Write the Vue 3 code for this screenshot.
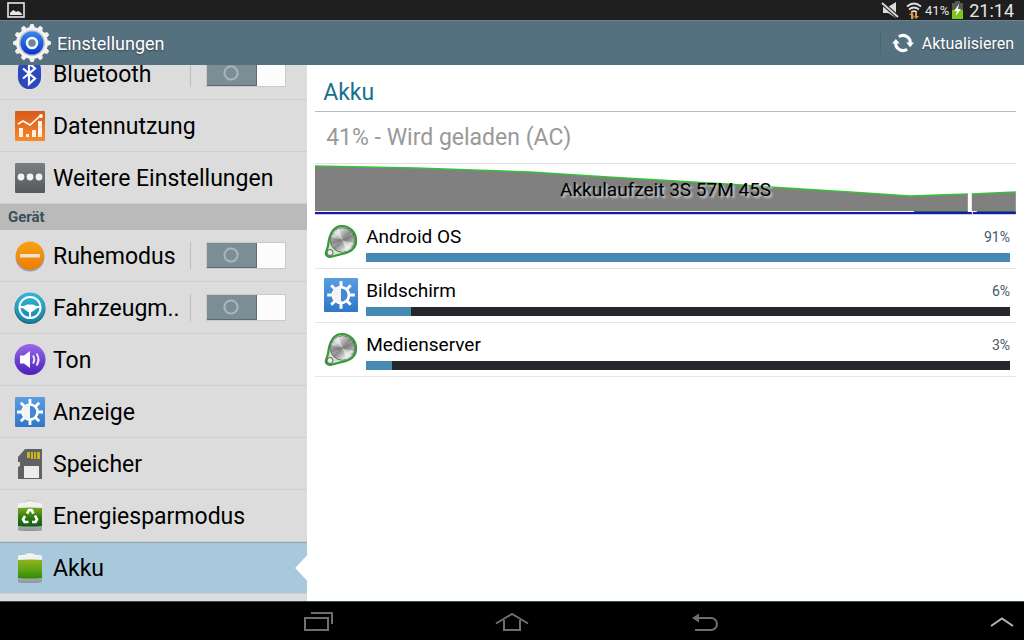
<template>
  <div class="tablet">
    <header class="status-bar">
      <svg class="status-picture" viewBox="0 0 18 16" aria-hidden="true">
        <rect x="1" y="1" width="16" height="14" fill="none" stroke="#e6e6e6" stroke-width="1.6" />
        <path d="M3 13v-2l2-2 1-1 2 1 1 1 2-1 2 1 2 2v1z" fill="#e6e6e6" />
      </svg>
      <div class="status-right">
        <svg class="status-mute" viewBox="0 0 18 18" aria-hidden="true">
          <path d="M2 6h5l8-5v16l-8-5H2z" fill="#dcdcdc" />
          <path d="M1 2l16 14" stroke="#1e1e1e" stroke-width="4" />
          <path d="M1 2l16 14" stroke="#dcdcdc" stroke-width="1.8" />
        </svg>
        <svg class="status-wifi" viewBox="0 0 16 18" aria-hidden="true">
          <g fill="none" stroke="#e0e0e0" stroke-width="1.8">
            <path d="M1 5.5q7-6 14 0" />
            <path d="M3 8.5q5-4 10 0" />
            <path d="M5.2 11.2q2.8-2 5.6 0" />
          </g>
          <path d="M5 18v-4H3l3-3 1.500 3v4zM9 11h2v4h2l-3 3-2-3h1z" fill="#e39b4b" />
        </svg>
        <span class="status-percent">41%</span>
        <svg class="status-battery" viewBox="0 0 13 18" aria-hidden="true">
          <path d="M4 0h5v2h3v7H1V2h3z" fill="#555b50" />
          <path d="M1 9h11v9H1z" fill="#7bc51c" />
          <path d="M8 3L3 10h3l-1.500 5L10 8H7z" fill="#fff" />
        </svg>
        <span class="status-time">21:14</span>
      </div>
    </header>

    <div class="action-bar">
      <svg class="app-icon" viewBox="0 0 38 38" aria-hidden="true">
        <defs>
          <linearGradient id="gearBlue" x1="0" y1="0" x2="0" y2="1">
            <stop offset="0" stop-color="#3c86ee" />
            <stop offset="1" stop-color="#0a38c4" />
          </linearGradient>
        </defs>
        <path :d="gear" fill="#f5f3ee" stroke="#f5f3ee" stroke-width="1" stroke-linejoin="round" />
        <circle cx="19" cy="19" r="13" fill="#b9c2d8" />
        <circle cx="19" cy="19" r="11.500" fill="url(#gearBlue)" />
        <circle cx="19" cy="19" r="5" fill="#6f84a4" stroke="#f4f6fa" stroke-width="2.600" />
      </svg>
      <h1 class="app-title">Einstellungen</h1>
      <button class="refresh" type="button">
        <svg viewBox="0 0 24 24" aria-hidden="true">
          <g fill="none" stroke="#fff" stroke-width="3.400">
            <path d="M7.500 5.200A8 8 0 0 1 20 12" />
            <path d="M16.500 18.800A8 8 0 0 1 4 12" />
          </g>
          <path d="M15.500 11.500h8.500l-4.200 5zM0 12.500h8.500L4.200 7.500z" fill="#fff" />
        </svg>
        Aktualisieren
      </button>
    </div>

    <div class="content">
      <nav class="sidebar" aria-label="Einstellungen">
        <template v-for="group in groups" :key="group.id">
          <h2 v-if="group.title" class="group-title">{{ group.title }}</h2>
          <ul class="menu" :class="{ scrolled: !group.title }">
            <li v-for="item in group.items" :key="item.icon" class="menu-row" :class="{ selected: item.icon === selected }">
              <a class="menu-link" href="#" @click.prevent="selected = item.icon">
                <svg class="menu-icon" viewBox="0 0 32 32" aria-hidden="true">
                  <g v-if="item.icon === 'bluetooth'">
                    <rect x="4" y="0" width="23" height="31" rx="11.500" fill="#2b48bd" />
                    <path d="M9 10.500l12 10-6 5.500V5l6 5.500-12 10" fill="none" stroke="#fff" stroke-width="2.200" />
                  </g>
                  <g v-else-if="item.icon === 'data'">
                    <rect x="1" y="1" width="30" height="30" rx="1" fill="url(#orangeFill)" />
                    <path d="M5 18h4v9H5zM12 24h3v3h-3zM18 20h4v7h-4zM24 11h4v16h-4z" fill="#fff3e8" />
                    <path d="M4 14l5-3 7 4 10-9" fill="none" stroke="#fff" stroke-width="1.600" />
                    <circle cx="27" cy="6" r="1.900" fill="#fff" />
                  </g>
                  <g v-else-if="item.icon === 'more'">
                    <rect x="1" y="1" width="30" height="30" rx="1" fill="url(#grayFill)" />
                    <circle cx="7" cy="15" r="3.400" fill="#f2f2f2" />
                    <circle cx="16" cy="15" r="3.400" fill="#f2f2f2" />
                    <circle cx="25" cy="15" r="3.400" fill="#f2f2f2" />
                  </g>
                  <g v-else-if="item.icon === 'blocking'">
                    <circle cx="16" cy="17" r="14.500" fill="#a39a9c" />
                    <circle cx="16" cy="15.500" r="14" fill="url(#amberFill)" />
                    <rect x="6" y="14" width="20" height="3.500" fill="#efe2d2" />
                  </g>
                  <g v-else-if="item.icon === 'car'">
                    <circle cx="16" cy="16.500" r="15.500" fill="#27677f" />
                    <circle cx="16" cy="15.500" r="15" fill="url(#cyanFill)" />
                    <circle cx="16" cy="15.500" r="10.500" fill="none" stroke="#fff" stroke-width="2" />
                    <path d="M6 14q5 0 7-1.500h6q2 1.500 7 1.500v1.500q-4 .5-6 3L17 20.500V26h-2v-5.500l-3-2q-2-2.500-6-3z" fill="#fff" />
                  </g>
                  <g v-else-if="item.icon === 'sound'">
                    <circle cx="16" cy="15.500" r="15.500" fill="url(#violetFill)" />
                    <path d="M6 11.500h4L16 7v17l-6-4.500H6z" fill="#fff" />
                    <path d="M19 11.500q2.500 4 0 8M22.500 9.500q4 6 0 12" fill="none" stroke="#efe6ff" stroke-width="2" />
                  </g>
                  <g v-else-if="item.icon === 'display'">
                    <rect x="1" y="1" width="30" height="30" rx="1" fill="url(#blueFill)" />
                    <path :d="rays" stroke="#fff" stroke-width="2.800" />
                    <circle cx="16" cy="16" r="7.500" fill="#4289d5" stroke="#fff" stroke-width="2.600" />
                    <path d="M16 8a8 8 0 0 0 0 16z" fill="#f4f4f4" />
                  </g>
                  <g v-else-if="item.icon === 'storage'">
                    <path d="M11 1h17v30H4V19l2-1v-4H4V9z" fill="#5f6163" />
                    <path d="M13 4h3v6h-3zM17 4h2v7h-2zM20 4h2v7h-2zM23 4h3v7h-3z" fill="#c9b51c" />
                    <path d="M10 18h15v12H10z" fill="#ececec" />
                  </g>
                  <g v-else-if="item.icon === 'saving' || item.icon === 'battery'">
                    <ellipse cx="16" cy="2.500" rx="5" ry="2" fill="#eceff1" stroke="#a9adb0" stroke-width=".6" />
                    <path d="M4 4q1-1.500 12-1.500T28 4v26q-1 1-12 1T4 30z" fill="url(#metalFill)" />
                    <path d="M4 8q12-1 24 0v18q-12 1-24 0z" :fill="item.icon === 'saving' ? 'url(#darkGreenFill)' : 'url(#greenFill)'" />
                    <g v-if="item.icon === 'saving'" fill="none" stroke="#fff" stroke-width="2.600">
                      <path d="M13 13.500L15 10h2.500l2 3.500" />
                      <path d="M21 15.500l2 4-1.500 2.500H18" />
                      <path d="M14.500 22h-4L9 19.500l2-3.500" />
                    </g>
                  </g>
                </svg>
                <span class="menu-label">{{ item.label }}</span>
              </a>
              <span v-if="item.toggle" class="toggle-cell">
                <input class="toggle" type="checkbox" :aria-label="item.label" />
              </span>
            </li>
          </ul>
        </template>
      </nav>

      <main class="details">
        <h2 class="details-title">Akku</h2>
        <p class="summary">41% - Wird geladen (AC)</p>

        <div class="chart">
          <svg viewBox="0 0 701 51" preserveAspectRatio="none" aria-hidden="true">
            <path d="M0 2L100 4 215 8 293 13 412 20 455 23 535 28 595 32 653 30V47H0z" fill="#808080" />
            <path d="M657 30L701 28V47H657z" fill="#808080" />
            <path d="M0 2L100 4 215 8 293 13 412 20 455 23 535 28 595 32 653 30M657 30L701 28" fill="none" stroke="#35c235" stroke-width="1.500" />
            <rect x="599" y="47" width="54" height="2" fill="#1c6a5a" />
            <rect x="662" y="47" width="39" height="2" fill="#1c6a5a" />
            <rect y="50" width="701" height="1" fill="#ccccf6" />
            <rect y="48" width="657" height="2" fill="#1a1a9c" />
            <rect x="658" y="48" width="43" height="2" fill="#1a1a9c" />
          </svg>
          <span class="chart-label">Akkulaufzeit 3S 57M 45S</span>
        </div>

        <ul class="usage">
          <li v-for="row in usage" :key="row.name" class="usage-row">
            <svg v-if="row.icon === 'display'" class="usage-icon" viewBox="0 0 32 32" aria-hidden="true">
              <rect width="32" height="32" rx="1" fill="url(#blueFill)" />
              <path :d="rays" stroke="#fff" stroke-width="2.800" />
              <circle cx="16" cy="16" r="7.500" fill="#4289d5" stroke="#fff" stroke-width="2.600" />
              <path d="M16 8a8 8 0 0 0 0 16z" fill="#f4f4f4" />
            </svg>
            <svg v-else class="usage-icon" viewBox="0 0 34 34" aria-hidden="true">
              <path d="M4 22C5 12 8 2 18 2a14 14 0 0 1 14 15c0 9-9 12-14 13L6 33q-5-1-4-5z" fill="#cfe6c8" stroke="#2f9c38" stroke-width="2.200" />
              <circle cx="18.500" cy="16" r="12.300" fill="url(#knobFill)" stroke="#5a5a5a" stroke-width=".8" />
              <path d="M18.500 16L9 8l6-4zM18.500 16l10 8-6 4z" fill="#fff" opacity=".45" />
              <path d="M18.500 16L30 9v10zM18.500 16L7 13v8z" fill="#444" opacity=".35" />
              <circle cx="6" cy="28.500" r="3" fill="#ececec" stroke="#5c5f5c" />
            </svg>
            <div class="usage-body">
              <div class="usage-head">
                <span class="usage-name">{{ row.name }}</span>
                <span class="usage-percent">{{ row.percent }}%</span>
              </div>
              <div class="usage-track">
                <div class="usage-fill" :style="{ width: row.fill + '%' }"></div>
              </div>
            </div>
          </li>
        </ul>
      </main>
    </div>

    <footer class="nav-bar">
      <button class="nav-recents" type="button" aria-label="Letzte Apps">
        <svg viewBox="0 0 30 20" aria-hidden="true">
          <path d="M1 7h23v12H1zM7 2h21v11" />
        </svg>
      </button>
      <button class="nav-home" type="button" aria-label="Startseite">
        <svg viewBox="0 0 34 20" aria-hidden="true">
          <path d="M1 12.500L17 3l16 9.500M9 9v10h16V9" />
        </svg>
      </button>
      <button class="nav-back" type="button" aria-label="Zurück">
        <svg viewBox="0 0 26 20" aria-hidden="true">
          <path d="M5 7h14a5.500 5.500 0 0 1 0 12H3" />
          <path class="solid" d="M0 7l7-4.500v9z" />
        </svg>
      </button>
      <button class="nav-up" type="button" aria-label="Mehr">
        <svg viewBox="0 0 24 12" aria-hidden="true">
          <path d="M1 11L12 3.500l11 7.500" />
        </svg>
      </button>
    </footer>

    <svg class="gradients" width="0" height="0" aria-hidden="true">
      <defs>
        <linearGradient v-for="g in gradients" :id="g.id" :key="g.id" x1="0" y1="0" :x2="g.slant || 0" y2="1">
          <stop v-for="(c, i) in g.colors" :key="i" :offset="i / (g.colors.length - 1)" :stop-color="c" />
        </linearGradient>
      </defs>
    </svg>
  </div>
</template>

<script setup>
import { ref } from 'vue';

const selected = ref('battery');

const groups = [
  {
    id: 'network',
    items: [
      { icon: 'bluetooth', label: 'Bluetooth', toggle: true },
      { icon: 'data', label: 'Datennutzung' },
      { icon: 'more', label: 'Weitere Einstellungen' },
    ],
  },
  {
    id: 'device',
    title: 'Gerät',
    items: [
      { icon: 'blocking', label: 'Ruhemodus', toggle: true },
      { icon: 'car', label: 'Fahrzeugm..', toggle: true },
      { icon: 'sound', label: 'Ton' },
      { icon: 'display', label: 'Anzeige' },
      { icon: 'storage', label: 'Speicher' },
      { icon: 'saving', label: 'Energiesparmodus' },
      { icon: 'battery', label: 'Akku' },
    ],
  },
];

const usage = [
  { name: 'Android OS', icon: 'knob', percent: 91, fill: 100 },
  { name: 'Bildschirm', icon: 'display', percent: 6, fill: 7 },
  { name: 'Medienserver', icon: 'knob', percent: 3, fill: 4 },
];

const gradients = [
  { id: 'orangeFill', colors: ['#d75a1c', '#f58a2c'] },
  { id: 'grayFill', colors: ['#7c7f82', '#56585b'] },
  { id: 'amberFill', colors: ['#f7a212', '#ee7c00'] },
  { id: 'cyanFill', colors: ['#35b7d6', '#1583a8'] },
  { id: 'violetFill', colors: ['#9a68ea', '#4a20bb'] },
  { id: 'blueFill', colors: ['#5a9de2', '#2f78c6'] },
  { id: 'metalFill', colors: ['#f4f5f6', '#dfe1e3', '#8e9295'] },
  { id: 'greenFill', colors: ['#8fb41c', '#62a612', '#2f8a0c'] },
  { id: 'darkGreenFill', colors: ['#7fa81a', '#2f7d10', '#0f5c14'] },
  { id: 'knobFill', colors: ['#6e6e6e', '#d8d8d8', '#8a8a8a', '#e6e6e6', '#6a6a6a'], slant: 1 },
];

// Eight short rays around the brightness dial
const rays = Array.from({ length: 8 }, (_, i) => {
  const a = (i * Math.PI) / 4;
  const x = Math.cos(a);
  const y = Math.sin(a);
  return `M${16 + x * 8} ${16 + y * 8}L${16 + x * 13} ${16 + y * 13}`;
}).join('');

// Twelve tapered teeth, four points each
const gear = Array.from({ length: 12 }, (_, i) => {
  const tooth = [[-9, 15.5], [-4, 18.5], [4, 18.5], [9, 15.5]];
  return tooth
    .map(([deg, r]) => {
      const a = ((i * 30 + deg) * Math.PI) / 180;
      return `${19 + Math.cos(a) * r} ${19 + Math.sin(a) * r}`;
    })
    .join('L');
}).join('L').replace(/^/, 'M') + 'z';
</script>

<style>
body {
  background: #fff;
}
</style>

<style scoped>
.tablet {
  display: flex;
  flex-direction: column;
  height: 100vh;
  overflow: hidden;
  background: #fff;
  color: #000;
  font-family: Roboto, 'Noto Sans', sans-serif;
}

h1,
h2,
p,
ul {
  margin: 0;
  padding: 0;
  font-weight: 400;
  list-style: none;
}

button {
  padding: 0;
  border: 0;
  background: none;
  color: inherit;
  font: inherit;
}

svg {
  display: block;
  flex: none;
}

.gradients {
  position: absolute;
}

/* Status bar */
.status-bar {
  display: flex;
  align-items: center;
  justify-content: space-between;
  flex: none;
  height: 20px;
  padding: 0 10px 0 7px;
  background: #1e1e1e;
  color: #e6e6e6;
}

.status-picture {
  width: 18px;
  height: 16px;
}

.status-right {
  display: flex;
  align-items: center;
}

.status-mute {
  width: 18px;
  height: 18px;
  margin-right: 7px;
}

.status-wifi {
  width: 16px;
  height: 18px;
  margin-right: 3px;
}

.status-percent {
  font-size: 13px;
}

.status-battery {
  width: 13px;
  height: 18px;
  margin: 0 5px 0 2px;
}

.status-time {
  font-size: 18px;
}

/* Action bar */
.action-bar {
  display: flex;
  align-items: center;
  flex: none;
  box-sizing: border-box;
  height: 45px;
  padding: 0 10px 0 13px;
  border-top: 1px solid #6b8390;
  background: #55707f;
  color: #fff;
  text-shadow: 0 1px 2px rgba(0, 0, 0, 0.4);
}

.app-icon {
  width: 38px;
  height: 38px;
}

.app-title {
  flex: 1;
  margin-left: 6px;
  font-size: 18px;
}

.refresh {
  display: flex;
  align-items: center;
  gap: 8px;
  padding-left: 11px;
  border-left: 1px solid #4c6674;
  font-size: 16px;
  text-shadow: inherit;
}

.refresh svg {
  width: 22px;
  height: 22px;
}

.content {
  display: flex;
  flex: 1;
  min-height: 0;
}

/* Sidebar */
.sidebar {
  flex: 0 0 30%;
  box-sizing: border-box;
  overflow: hidden;
  background: #dcdcdc;
}

.scrolled {
  margin-top: -17px;
}

.group-title {
  height: 26px;
  padding-left: 8px;
  background: #bababa;
  color: #3c4d57;
  font-size: 15px;
  font-weight: 700;
  line-height: 26px;
}

.menu-row {
  position: relative;
  display: flex;
  align-items: center;
  box-sizing: border-box;
  height: 52px;
  border-bottom: 1px solid #cfcfcf;
}

.menu-link {
  display: flex;
  align-items: center;
  flex: 1;
  gap: 7px;
  min-width: 0;
  padding-left: 14px;
  color: #000;
  text-decoration: none;
}

.menu-icon {
  width: 32px;
  height: 32px;
}

.menu-label {
  padding-top: 2px;
  font-size: 23px;
  line-height: 24px;
  white-space: nowrap;
}

.toggle-cell {
  padding: 0 21px 0 15px;
  border-left: 1px solid #bdbdbd;
}

.toggle {
  display: block;
  box-sizing: border-box;
  appearance: none;
  width: 80px;
  height: 27px;
  margin: 0;
  border: 1px solid #cacaca;
  background:
    radial-gradient(circle at 24px 12px, transparent 5px, #a9b7bd 6px, #a9b7bd 7px, transparent 8px) no-repeat,
    linear-gradient(#7b8d95, #7b8d95) 0 0 / 49px 24px no-repeat,
    linear-gradient(#5b6b72, #5b6b72) 0 0 / 50px 100% no-repeat,
    #fcfcfc;
}

.selected {
  border-top: 1px solid #8da5b1;
  background: #a8c9dc;
}

.selected::after {
  content: '';
  position: absolute;
  top: 12px;
  right: 0;
  width: 12px;
  height: 26px;
  background: #fff;
  clip-path: polygon(100% 0, 0 50%, 100% 100%);
}

/* Battery details */
.details {
  flex: 1;
  min-width: 0;
  padding: 0 8px;
}

.details-title {
  padding: 13px 8px 3px;
  border-bottom: 1px solid #b4bcc1;
  color: #16708f;
  font-size: 23px;
  line-height: 30px;
}

.summary {
  padding: 11px 11px 10px;
  border-bottom: 1px solid #dfe1e2;
  color: #999;
  font-size: 23px;
  line-height: 30px;
}

.chart {
  position: relative;
}

.chart svg {
  width: 100%;
  height: 51px;
}

.chart-label {
  position: absolute;
  top: 15px;
  left: 0;
  width: 100%;
  font-size: 19px;
  line-height: 22px;
  text-align: center;
  text-shadow: 2px 2px 2px #ccc;
}

.usage-row {
  display: flex;
  align-items: flex-start;
  gap: 8px;
  box-sizing: border-box;
  height: 54px;
  padding: 9px 6px 0 9px;
  border-bottom: 1px solid #e4e6e7;
}

.usage-icon {
  width: 34px;
  height: 34px;
}

.usage-body {
  flex: 1;
  min-width: 0;
}

.usage-head {
  display: flex;
  align-items: center;
  justify-content: space-between;
  margin-bottom: 3px;
}

.usage-name {
  font-size: 19px;
  line-height: 26px;
}

.usage-percent {
  color: #47596a;
  font-size: 14px;
}

.usage-track {
  height: 9px;
  background: #27272b;
}

.usage-fill {
  height: 100%;
  background: #468ab4;
}

/* System navigation */
.nav-bar {
  display: grid;
  grid-template-columns: 1fr 193px 193px 193px 1fr;
  align-items: center;
  flex: none;
  box-sizing: border-box;
  height: 39px;
  border-top: 1px solid #35505c;
  background: #000;
}

.nav-bar button {
  display: flex;
  justify-content: center;
}

.nav-bar svg {
  height: 20px;
  fill: none;
  stroke: #6e6e6e;
  stroke-width: 2;
}

.nav-bar .solid {
  fill: #6e6e6e;
  stroke: none;
}

.nav-bar .nav-recents {
  grid-column: 2;
}

.nav-bar .nav-up {
  justify-self: end;
  padding-right: 10px;
}

.nav-bar .nav-up svg {
  height: 12px;
  stroke: #b5b5b5;
}
</style>
